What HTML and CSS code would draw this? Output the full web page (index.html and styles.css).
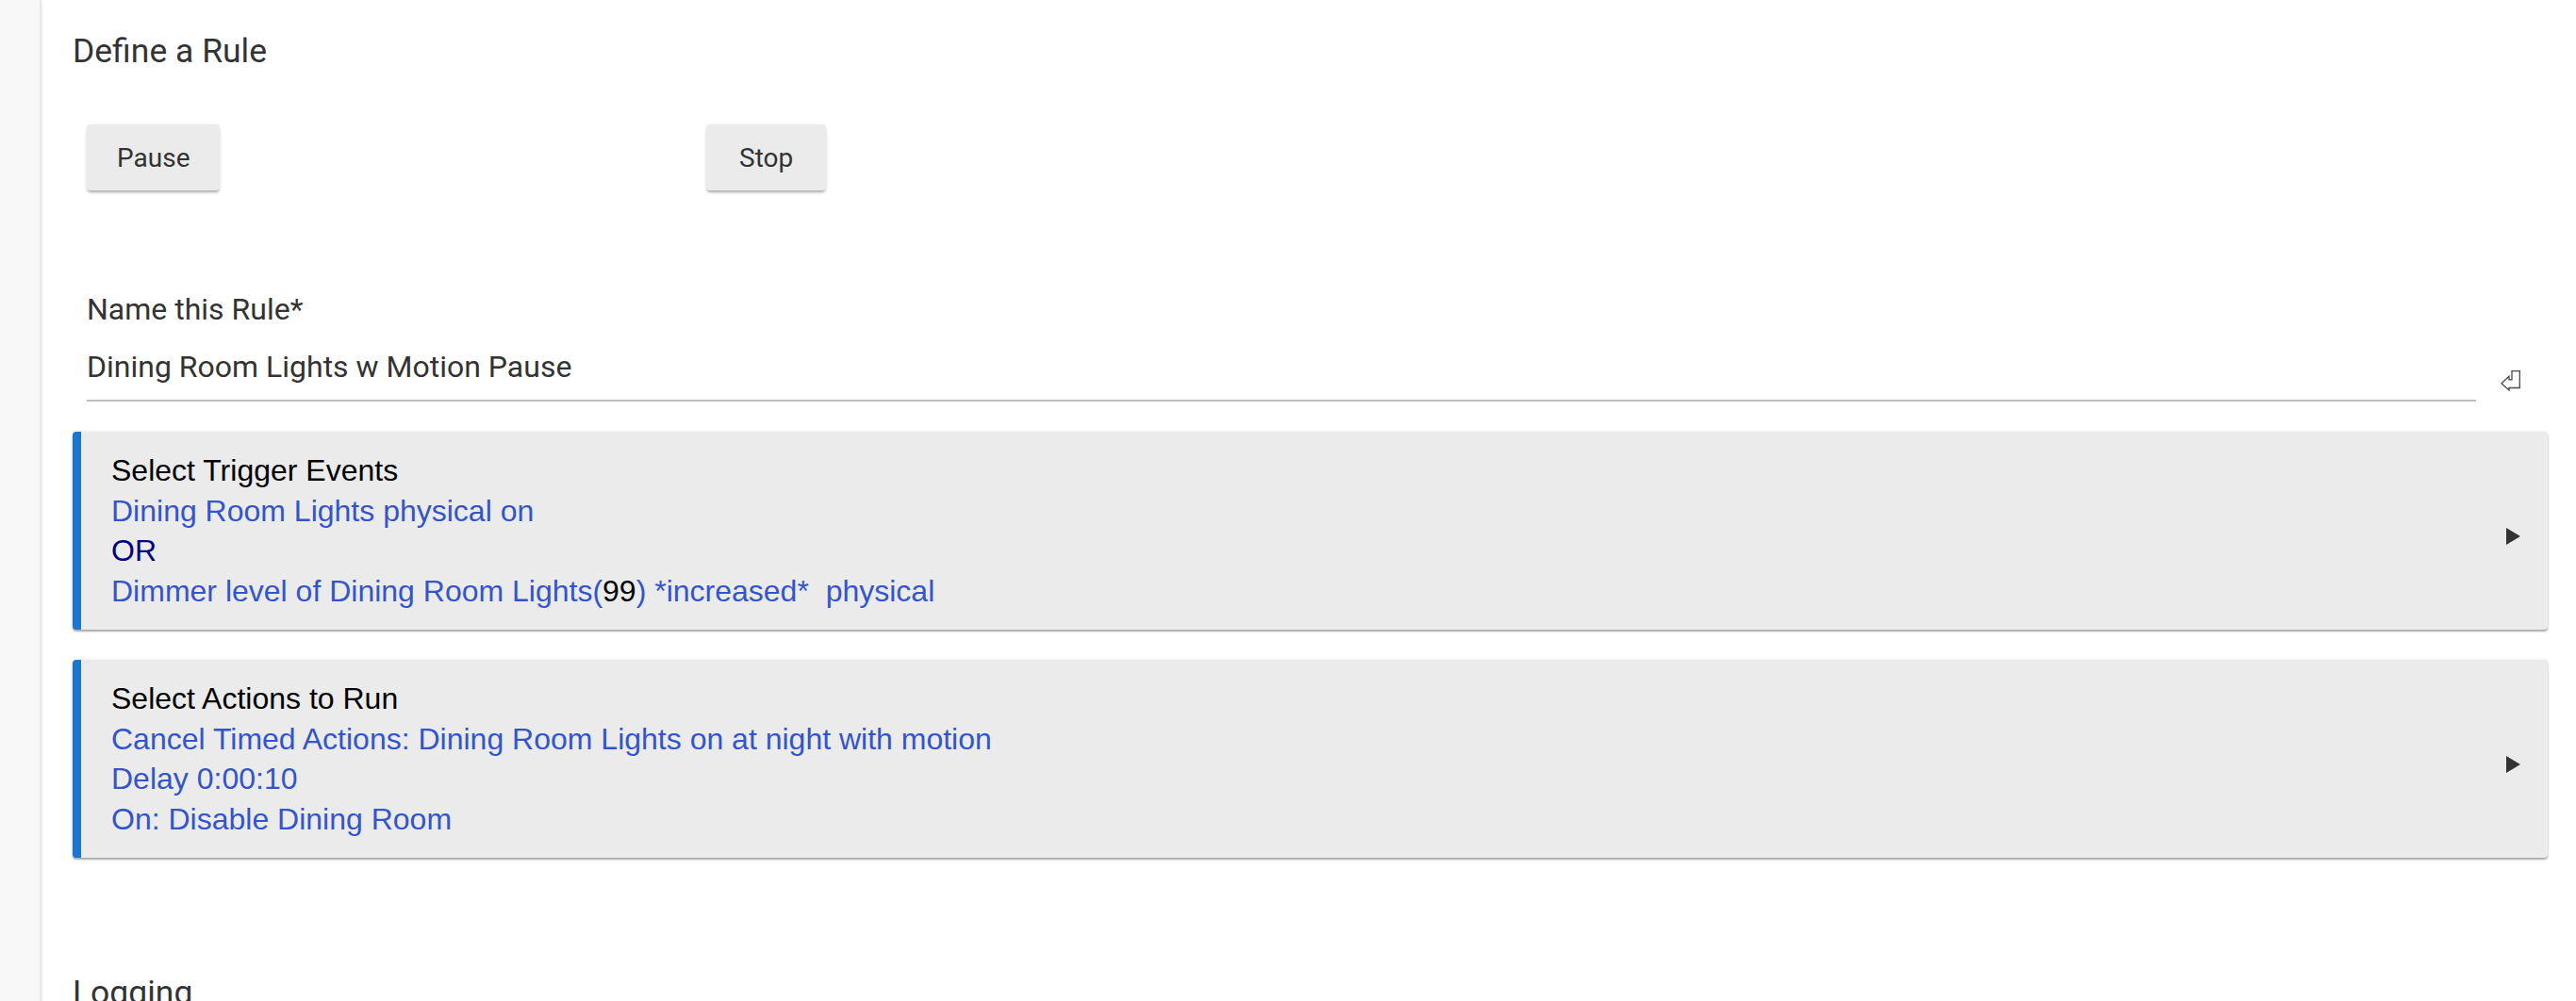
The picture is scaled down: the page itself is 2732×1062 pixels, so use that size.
FILE: index.html
```html
<!DOCTYPE html>
<html>
<head>
<meta charset="utf-8">
<title>Define a Rule</title>
<link rel="stylesheet" href="styles.css">
</head>
<body>
<div class="page">
  <aside class="sidebar"></aside>
  <main class="content">
    <h1 class="title">Define a Rule</h1>
    <div class="btn-row">
      <div class="cell"><button class="btn">Pause</button></div>
      <div class="cell"><button class="btn btn-stop">Stop</button></div>
      <div class="cell"></div>
      <div class="cell"></div>
    </div>
    <div class="name-row">
      <div class="field">
        <div class="field-label">Name this Rule*</div>
        <div class="field-value">Dining Room Lights w Motion Pause</div>
      </div>
      <div class="field-icon">
        <svg width="22" height="22" viewBox="0 0 22 22" aria-hidden="true">
          <path d="M12 0.7 H20.3 V18.5 H9 V21 L1 13.7 L9 6.3 V9.8 H12 Z" fill="none" stroke="#4a4a4a" stroke-width="1.3" stroke-linejoin="miter"/>
        </svg>
      </div>
    </div>
    <div class="card">
      <div class="card-body">
        <div class="card-head">Select Trigger Events</div>
        <div class="link">Dining Room Lights physical on</div>
        <div class="or">OR</div>
        <div class="link">Dimmer level of Dining Room Lights(<span class="val">99</span>) *increased*&nbsp; physical</div>
      </div>
      <div class="arrow"></div>
    </div>
    <div class="card">
      <div class="card-body">
        <div class="card-head">Select Actions to Run</div>
        <div class="link">Cancel Timed Actions: Dining Room Lights on at night with motion</div>
        <div class="link">Delay 0:00:10</div>
        <div class="link">On: Disable Dining Room</div>
      </div>
      <div class="arrow"></div>
    </div>
    <h2 class="section">Logging</h2>
  </main>
</div>
</body>
</html>
```
FILE: styles.css
```css
html, body {
  margin: 0;
  padding: 0;
  background: #ffffff;
  font-family: Roboto, "Liberation Sans", Arial, sans-serif;
  color: #333333;
}

.page {
  display: flex;
  min-height: 1062px;
  overflow: hidden;
}

.sidebar {
  width: 42px;
  flex: none;
  background: #f8f8f8;
  box-shadow: 1px 0 3px rgba(0, 0, 0, 0.12);
  border-right: 1px solid #e6e6e6;
}

.content {
  flex: none;
  width: 2625px;
  margin-left: 34px;
}

.title {
  margin: 33px 0 0 0;
  font-size: 35.5px;
  line-height: 42px;
  font-weight: 400;
  color: #333333;
}

.btn-row {
  display: grid;
  grid-template-columns: repeat(4, 657px);
  margin-top: 57px;
}

.cell {
  padding-left: 15px;
}

.btn {
  height: 70px;
  padding: 0 32px;
  border: none;
  border-radius: 4px;
  background: #ebebeb;
  font-family: Roboto, sans-serif;
  font-size: 28px;
  color: #333333;
  box-shadow: 0 3px 3px -1px rgba(0, 0, 0, 0.3), 0 1px 5px rgba(0, 0, 0, 0.08);
}

.btn-stop {
  padding: 0 35px;
}

.name-row {
  display: flex;
  align-items: flex-start;
  margin-top: 105px;
  padding-left: 15px;
}

.field {
  flex: 1;
}

.field-label {
  font-size: 32px;
  line-height: 42px;
  color: #333333;
}

.field-value {
  margin-top: 19px;
  font-size: 32px;
  line-height: 42px;
  color: #333333;
  padding-bottom: 14px;
  border-bottom: 2px solid #bdbdbd;
}

.field-icon {
  width: 50px;
  margin-left: 26px;
  margin-top: 86px;
  line-height: 0;
}

.card {
  display: flex;
  align-items: center;
  margin-top: 32px;
  background: #ebebeb;
  border-left: 9px solid #1976d2;
  border-radius: 4px;
  box-shadow: 0 2px 2px rgba(0, 0, 0, 0.32), 0 0 4px rgba(0, 0, 0, 0.08);
  padding: 20px 29px 20px 32px;
}

.card-body {
  flex: 1;
  font-family: "Liberation Sans", Arial, sans-serif;
  font-size: 32px;
  line-height: 42.5px;
}

.card-head {
  color: #000000;
}

.link {
  color: #3355cc;
}

.or {
  color: #000080;
}

.val {
  color: #000000;
}

.arrow {
  width: 0;
  height: 0;
  margin-top: 12px;
  border-top: 9px solid transparent;
  border-bottom: 9px solid transparent;
  border-left: 15px solid #333333;
}

.section {
  margin: 122px 0 0 0;
  font-size: 35.5px;
  line-height: 42px;
  font-weight: 400;
  color: #333333;
}
```
